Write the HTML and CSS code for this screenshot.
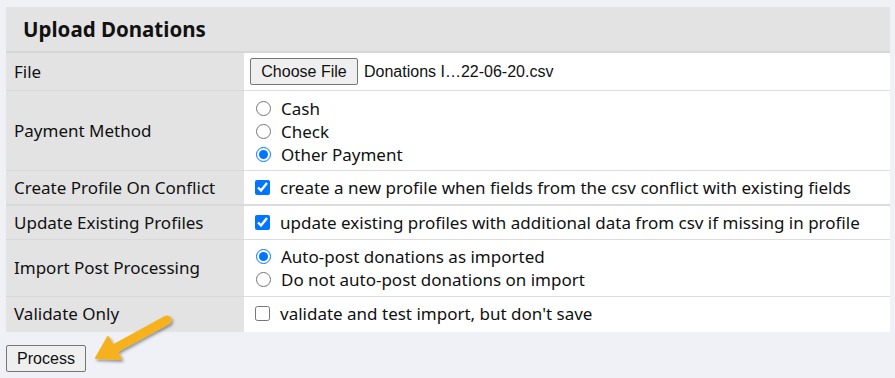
FILE: index.html
```html
<!DOCTYPE html>
<html>
<head>
<meta charset="utf-8">
<link rel="stylesheet" href="styles.css">
</head>
<body>
<div class="page">
  <table class="form">
    <thead>
      <tr><th colspan="2" class="title">Upload Donations</th></tr>
    </thead>
    <tbody>
      <tr class="r-file">
        <td class="lbl">File</td>
        <td class="val"><span class="filebox"><button class="btn choose">Choose File</button><span class="fname">Donations I…22-06-20.csv</span></span></td>
      </tr>
      <tr class="r-pay">
        <td class="lbl">Payment Method</td>
        <td class="val">
          <label class="opt"><input type="radio" name="pm">Cash</label>
          <label class="opt"><input type="radio" name="pm">Check</label>
          <label class="opt"><input type="radio" name="pm" checked>Other Payment</label>
        </td>
      </tr>
      <tr class="r-create">
        <td class="lbl">Create Profile On Conflict</td>
        <td class="val"><label class="opt chk"><input type="checkbox" checked>create a new profile when fields from the csv conflict with existing fields</label></td>
      </tr>
      <tr class="r-update">
        <td class="lbl">Update Existing Profiles</td>
        <td class="val"><label class="opt chk"><input type="checkbox" checked>update existing profiles with additional data from csv if missing in profile</label></td>
      </tr>
      <tr class="r-import">
        <td class="lbl">Import Post Processing</td>
        <td class="val">
          <label class="opt"><input type="radio" name="pp" checked>Auto-post donations as imported</label>
          <label class="opt"><input type="radio" name="pp">Do not auto-post donations on import</label>
        </td>
      </tr>
      <tr class="r-validate">
        <td class="lbl">Validate Only</td>
        <td class="val"><label class="opt chk"><input type="checkbox">validate and test import, but don't save</label></td>
      </tr>
    </tbody>
  </table>
  <div class="actions">
    <button class="btn process">Process</button>
    <svg class="arrow" width="92" height="62" viewBox="0 0 92 62">
      <defs>
        <filter id="sh" x="-20%" y="-20%" width="150%" height="160%">
          <feDropShadow dx="1.5" dy="2" stdDeviation="1.6" flood-color="#000" flood-opacity="0.4"/>
        </filter>
      </defs>
      <g filter="url(#sh)" fill="#f5b21b" stroke="#f5b21b">
        <line x1="79" y1="10" x2="25" y2="39.5" stroke-width="9" stroke-linecap="round"/>
        <polygon points="8,48 20,27 33,49" stroke-width="2" stroke-linejoin="round"/>
      </g>
    </svg>
  </div>
</div>
</body>
</html>
```

FILE: styles.css
```css
html, body {
  margin: 0;
  padding: 0;
  background: #eff1f7;
}
.page {
  padding: 7px 5px 0 6px;
  font-family: "Noto Sans", "Open Sans", sans-serif;
  color: #111;
}
.form {
  width: 884px;
  border-collapse: collapse;
  border-spacing: 0;
}
.title {
  background: #e3e3e3;
  text-align: left;
  font-size: 20.5px;
  font-weight: 700;
  height: 44px;
  padding: 0 0 0 17px;
  border-bottom: 2px solid #d6d6d6;
  color: #111;
}
.lbl {
  background: #e3e3e3;
  width: 222px;
  padding: 0 8px;
  font-size: 17px;
  line-height: 22px;
  border-bottom: 1px solid #d9d9d9;
  vertical-align: middle;
}
.val {
  background: #fff;
  padding: 0 8px;
  font-size: 17px;
  line-height: 22px;
  border-bottom: 1px solid #dcdcdc;
  vertical-align: middle;
}
.r-file td { height: 37px; }
.r-pay td { height: 77px; }
.r-pay .val { padding-top: 2px; }
.r-create td { height: 33px; border-bottom-width: 2px; }
.r-update td { height: 33px; }
.r-import td { height: 56px; }
.r-validate td { height: 33px; border-bottom: none; padding-bottom: 2px; }
.opt {
  display: flex;
  align-items: center;
  line-height: 23px;
}
.opt input {
  margin: 0 10px 0 4px;
  width: 15px;
  height: 15px;
}
.opt.chk input {
  margin: 0 10px 0 3px;
  width: 15px;
  height: 15px;
}
.filebox {
  display: flex;
  align-items: center;
  font-family: "Liberation Sans", Arial, sans-serif;
  font-size: 16px;
}
.btn {
  font-family: "Liberation Sans", Arial, sans-serif;
  font-size: 16px;
  color: #111;
  background: #efefef;
  border: 1px solid #767676;
  border-radius: 2px;
  padding: 0 10px;
  height: 27px;
}
.choose {
  margin: 0 6px 0 -2px;
  width: 108px;
}
.actions {
  position: relative;
  padding-top: 13px;
}
.process {
  width: 80px;
  padding: 0;
}
.arrow {
  position: absolute;
  left: 82px;
  top: -22px;
}
```
